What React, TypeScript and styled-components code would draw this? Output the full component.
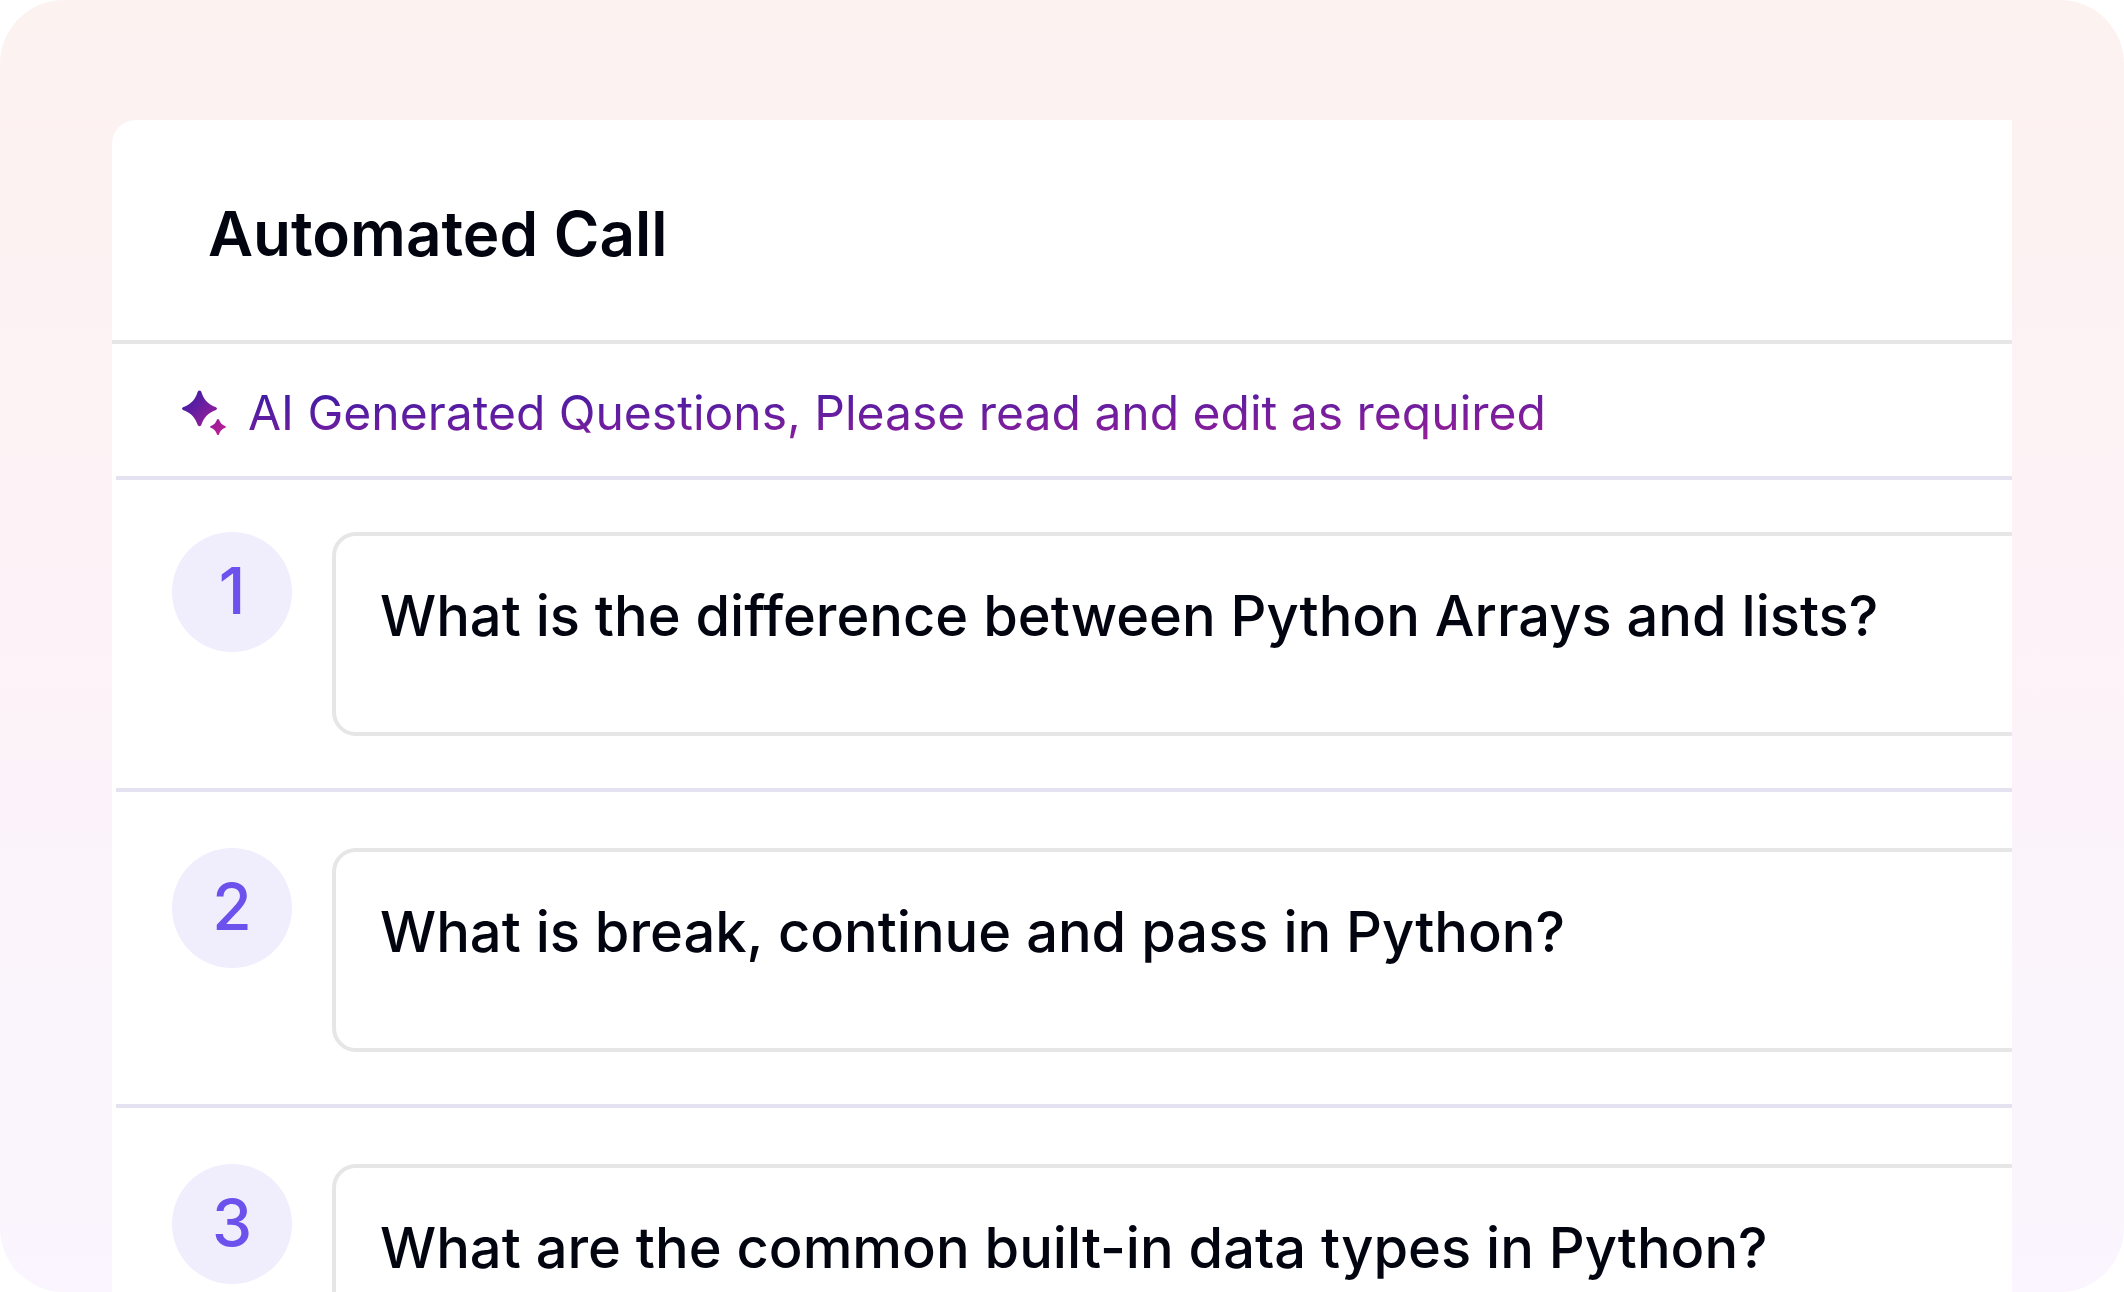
import React from "react";
import styled, { createGlobalStyle } from "styled-components";

const GlobalStyle = createGlobalStyle`
  *, *::before, *::after { box-sizing: border-box; }
  body {
    margin: 0;
    background: #ffffff;
    color: #02050f;
    font-family: Inter, "Liberation Sans", sans-serif;
  }
`;

const Stage = styled.main`
  height: 100vh;
  padding: 120px 112px 0;
  overflow: hidden;
  border-radius: 64px;
  background: linear-gradient(180deg, #fcf2f0 0%, #fdf2f3 24%, #fdf2f6 42%, #fcf3fa 62%, #faf5fc 80%, #faf5fe 100%);
`;

const Card = styled.section`
  height: 100%;
  overflow: hidden;
  border-top-left-radius: 24px;
  background: #ffffff;
`;

const CardHeader = styled.header`
  padding: 74px 96px 66px;
  border-bottom: 4px solid #e6e6e6;
`;

const Title = styled.h1`
  margin: 0;
  font-size: 62px;
  line-height: 80px;
  font-weight: 600;
`;

const Notice = styled.div`
  display: flex;
  align-items: center;
  gap: 20px;
  margin-left: 4px;
  padding: 39px 64px 33px;
  border-bottom: 4px solid #e4e1f0;
`;

const NoticeIcon = styled.svg`
  flex: none;
  width: 48px;
  height: 48px;
`;

const NoticeText = styled.p`
  margin: 0;
  font-size: 48px;
  line-height: 60px;
  font-weight: 400;
  color: transparent;
  background: linear-gradient(178.6deg, #331ca8, #ac1f94 112%);
  background-clip: text;
  -webkit-background-clip: text;
`;

const QuestionList = styled.ol`
  margin: 0 0 0 4px;
  padding: 0;
  list-style: none;
`;

const QuestionRow = styled.li`
  display: flex;
  align-items: flex-start;
  gap: 40px;
  padding: 56px 0 52px 56px;
  border-bottom: 4px solid #e4e1f0;

  &:first-child { padding-top: 52px; }
`;

const QuestionNumber = styled.label`
  display: flex;
  flex: none;
  justify-content: center;
  width: 120px;
  height: 120px;
  border-radius: 50%;
  background: #f0eefc;
  color: #6c51ed;
  font-size: 64px;
  line-height: 118px;
  font-weight: 500;
`;

const QuestionField = styled.textarea`
  flex: 1;
  min-width: 0;
  height: 204px;
  margin: 0 -32px 0 0;
  padding: 46px 44px;
  border: 4px solid #e6e6e6;
  border-radius: 24px;
  outline: none;
  resize: none;
  overflow: hidden;
  background: #ffffff;
  color: #02050f;
  font-family: inherit;
  font-size: 56px;
  line-height: 68px;
  font-weight: 500;
`;

const questions = [
  "What is the difference between Python Arrays and lists?",
  "What is break, continue and pass in Python?",
  "What are the common built-in data types in Python?",
];

function SparkleIcon() {
  return (
    <NoticeIcon viewBox="0 0 48 48" aria-hidden="true">
      <defs>
        <linearGradient id="sparkle" gradientUnits="userSpaceOnUse" x1="2" y1="4" x2="46" y2="46">
          <stop offset="0" stopColor="#331ca8" />
          <stop offset="1" stopColor="#c42092" />
        </linearGradient>
      </defs>
      <path
        fill="url(#sparkle)"
        d="M17.8 2.4Q19.5 0.6 21.2 2.4C23.6 10.2 27.2 14.6 36 18.2Q38 19.5 36 21C27.2 24.4 24 28.6 21.2 36.2Q19.5 38.2 17.8 36.2C15 28.6 11.8 24.4 3 21Q1 19.5 3 18.2C11.8 14.6 15.4 10.2 17.8 2.4Z"
      />
      <path
        fill="url(#sparkle)"
        d="M37 30.6Q38 29.2 39 30.6C40.4 34.2 41.8 35.8 45.4 37.2Q46.6 38 45.4 38.8C41.8 40.2 40.4 41.8 39 45.4Q38 46.8 37 45.4C35.6 41.8 34.2 40.2 30.6 38.8Q29.4 38 30.6 37.2C34.2 35.8 35.6 34.2 37 30.6Z"
      />
    </NoticeIcon>
  );
}

export default function App() {
  return (
    <>
      <GlobalStyle />
      <Stage>
        <Card>
          <CardHeader>
            <Title>Automated Call</Title>
          </CardHeader>
          <Notice>
            <SparkleIcon />
            <NoticeText>AI Generated Questions, Please read and edit as required</NoticeText>
          </Notice>
          <QuestionList>
            {questions.map((question, index) => (
              <QuestionRow key={question}>
                <QuestionNumber htmlFor={`question-${index + 1}`}>{index + 1}</QuestionNumber>
                <QuestionField id={`question-${index + 1}`} defaultValue={question} spellCheck={false} />
              </QuestionRow>
            ))}
          </QuestionList>
        </Card>
      </Stage>
    </>
  );
}
